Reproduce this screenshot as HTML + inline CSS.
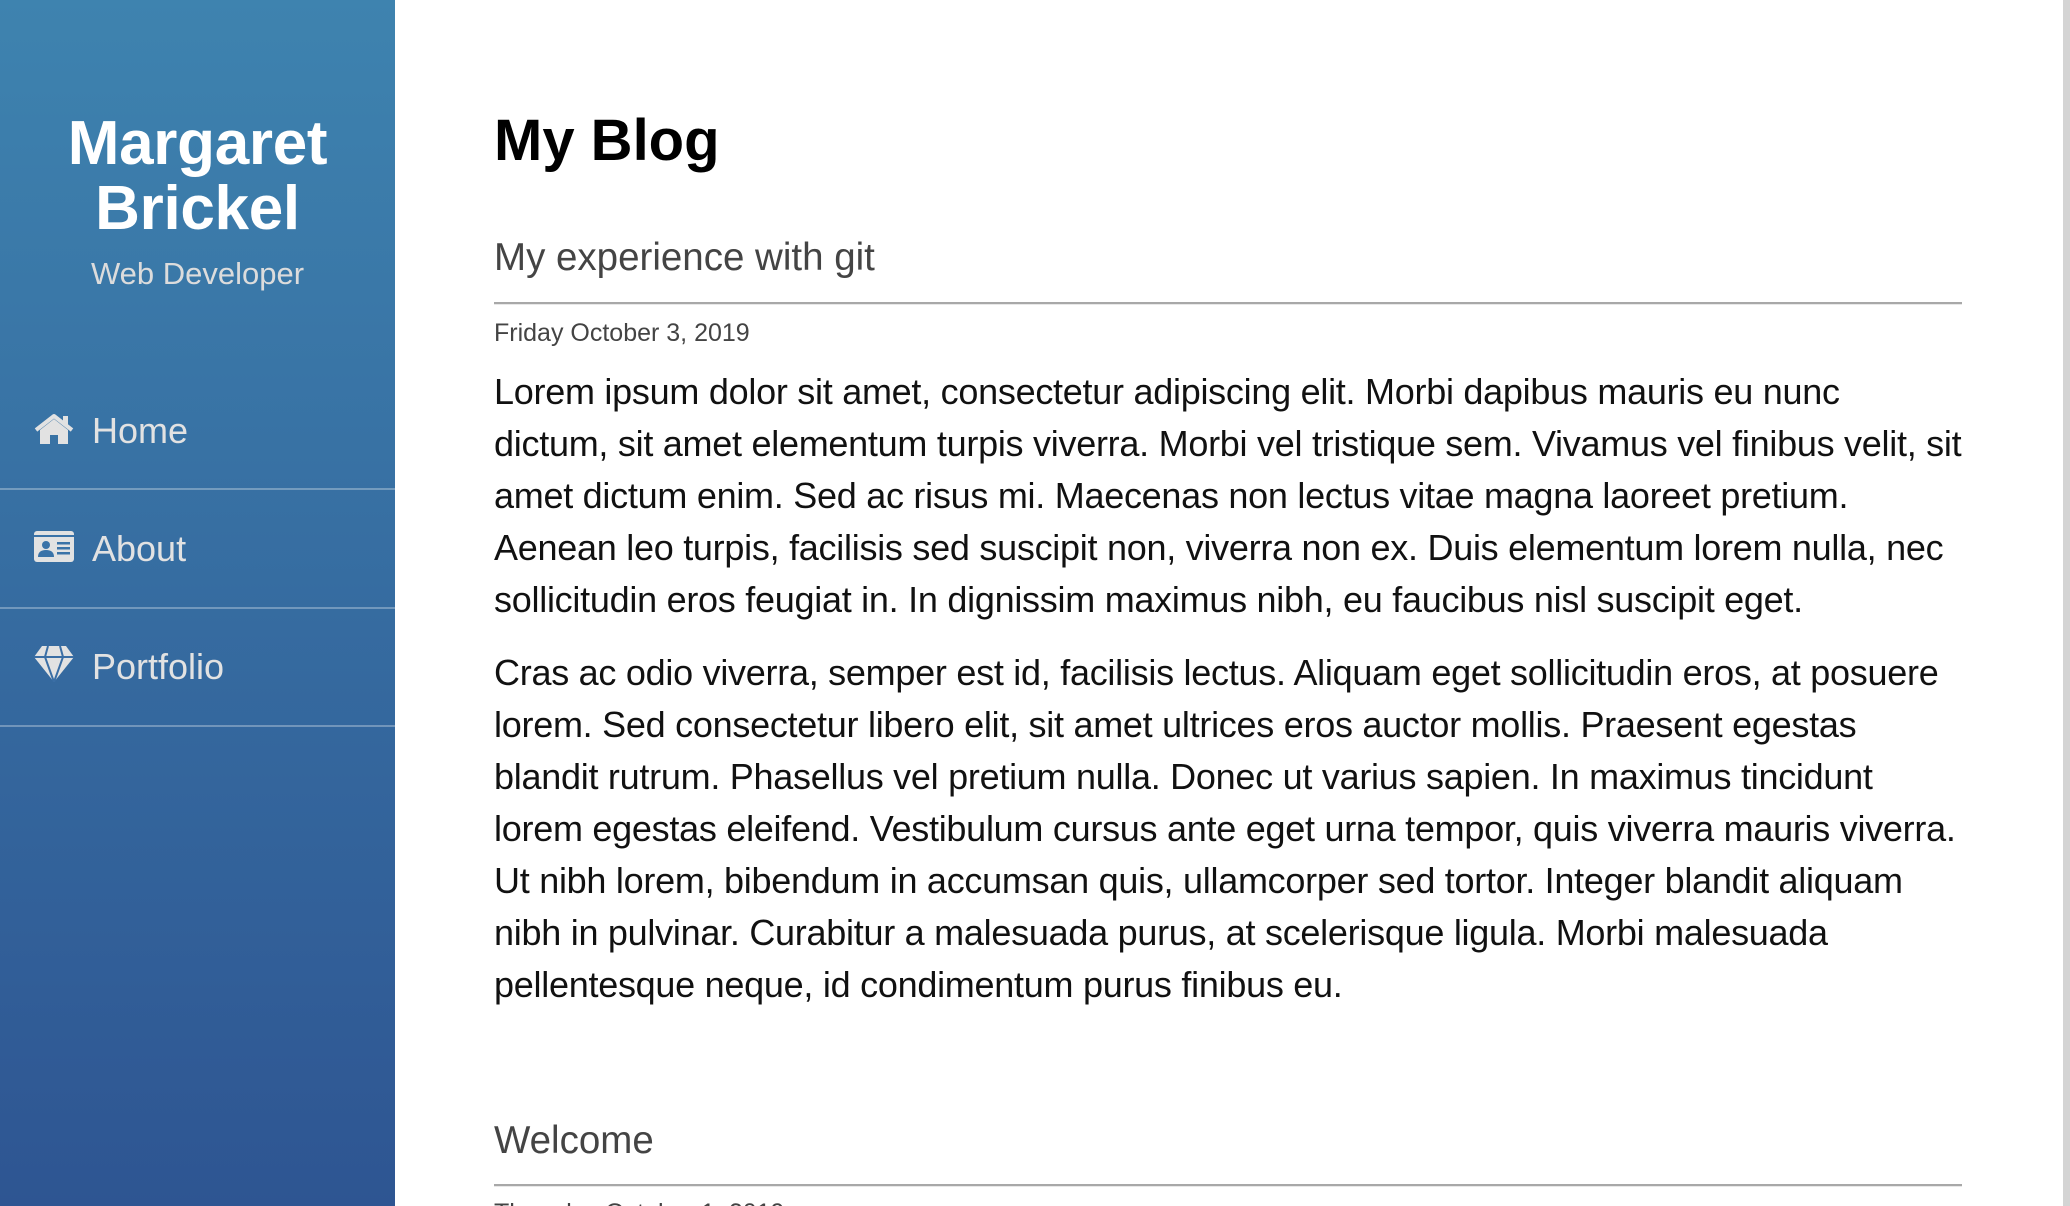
<!DOCTYPE html>
<html><head><meta charset="utf-8"><style>
*{margin:0;padding:0;box-sizing:border-box}
html,body{width:2070px;height:1206px;overflow:hidden;background:#fff;font-family:"Liberation Sans",Arial,sans-serif}
#w{position:relative;width:2070px;height:1206px;overflow:hidden}
.side{position:absolute;left:0;top:0;width:395px;height:1206px;background:linear-gradient(#3e83af,#2e5592)}
.a{position:absolute;white-space:nowrap;line-height:1.15}
.name{left:0;width:395px;text-align:center;color:#fff;font-weight:bold;font-size:62px;letter-spacing:-0.3px}
.nav{left:92px;color:#e2e2e2;font-size:36px}
.div{position:absolute;left:0;width:395px;height:2px;background:rgba(255,255,255,0.3)}
.ic{position:absolute;left:34px}
.sb{position:absolute;left:2063px;top:0;width:7px;height:1206px;background:#d4d4d4}
.hr{position:absolute;left:494px;width:1468px;height:3px;background:#a8a8a8;border-bottom:1px solid #e8e8e8}
.p{position:absolute;left:494px;font-size:36px;line-height:52px;color:#111;white-space:nowrap;letter-spacing:-0.27px}
</style></head><body><div id="w">
<div class="side">
<div class="a name" style="top:108px">Margaret</div>
<div class="a name" style="top:173px">Brickel</div>
<div class="a" style="left:0;width:395px;text-align:center;top:256px;font-size:31px;color:#dcdcdc">Web Developer</div>

<svg class="ic" style="top:413px" width="40" height="32" viewBox="0 0 40 32"><path fill="#e2e2e2" d="M20 6 L6 17 V31 H16 V22 H24 V31 H34 V17 Z"/><path fill="none" stroke="#e2e2e2" stroke-width="4" stroke-linejoin="round" d="M2 17 L20 3 L38 17"/><rect x="29" y="3" width="5" height="9" fill="#e2e2e2"/></svg>
<div class="a nav" style="top:410px">Home</div>
<div class="div" style="top:488px"></div>

<svg class="ic" style="top:531px" width="40" height="31" viewBox="0 0 40 31"><rect x="0" y="0" width="40" height="31" rx="3" fill="#e2e2e2"/><rect x="0" y="4" width="40" height="2" fill="#3a73a8"/><circle cx="12" cy="14" r="4" fill="#3a73a8"/><path d="M4 26 Q4 19 12 19 Q20 19 20 26 Z" fill="#3a73a8"/><rect x="23" y="11" width="13" height="2.5" fill="#3a73a8"/><rect x="23" y="16" width="13" height="2.5" fill="#3a73a8"/><rect x="23" y="21" width="13" height="2.5" fill="#3a73a8"/></svg>
<div class="a nav" style="top:528px">About</div>
<div class="div" style="top:607px"></div>

<svg class="ic" style="top:646px" width="40" height="36" viewBox="0 0 40 36"><path fill="#e2e2e2" d="M8 0 H32 L40 11 L20 36 L0 11 Z"/><path fill="none" stroke="#3a6ea5" stroke-width="2" d="M0 11 H40 M14 0 L11 11 L20 36 L29 11 L26 0"/></svg>
<div class="a nav" style="top:646px">Portfolio</div>
<div class="div" style="top:725px"></div>
</div>
<div class="sb"></div>

<div class="a" style="left:494px;top:108px;font-size:58px;font-weight:bold;color:#000">My Blog</div>
<div class="a" style="left:494px;top:236px;font-size:38.5px;color:#444">My experience with git</div>
<div class="hr" style="top:302px"></div>
<div class="a" style="left:494px;top:319px;font-size:25px;color:#444">Friday October 3, 2019</div>
<div class="p" style="top:366px">Lorem ipsum dolor sit amet, consectetur adipiscing elit. Morbi dapibus mauris eu nunc<br>dictum, sit amet elementum turpis viverra. Morbi vel tristique sem. Vivamus vel finibus velit, sit<br>amet dictum enim. Sed ac risus mi. Maecenas non lectus vitae magna laoreet pretium.<br>Aenean leo turpis, facilisis sed suscipit non, viverra non ex. Duis elementum lorem nulla, nec<br>sollicitudin eros feugiat in. In dignissim maximus nibh, eu faucibus nisl suscipit eget.</div>
<div class="p" style="top:647px">Cras ac odio viverra, semper est id, facilisis lectus. Aliquam eget sollicitudin eros, at posuere<br>lorem. Sed consectetur libero elit, sit amet ultrices eros auctor mollis. Praesent egestas<br>blandit rutrum. Phasellus vel pretium nulla. Donec ut varius sapien. In maximus tincidunt<br>lorem egestas eleifend. Vestibulum cursus ante eget urna tempor, quis viverra mauris viverra.<br>Ut nibh lorem, bibendum in accumsan quis, ullamcorper sed tortor. Integer blandit aliquam<br>nibh in pulvinar. Curabitur a malesuada purus, at scelerisque ligula. Morbi malesuada<br>pellentesque neque, id condimentum purus finibus eu.</div>
<div class="a" style="left:494px;top:1119px;font-size:38.5px;color:#444">Welcome</div>
<div class="hr" style="top:1184px"></div>
<div class="a" style="left:494px;top:1199px;font-size:25px;color:#444">Thursday October 1, 2019</div>
</div></body></html>
